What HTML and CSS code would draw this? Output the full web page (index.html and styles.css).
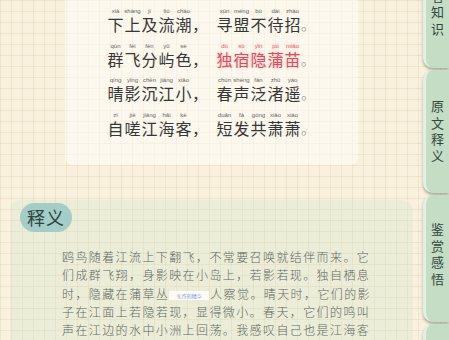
FILE: index.html
```html
<!DOCTYPE html>
<html lang="zh-CN">
  <head>
    <meta charset="UTF-8" />
    <meta name="viewport" content="width=device-width, initial-scale=1.0" />
    <title>江上</title>
    <link rel="stylesheet" href="styles.css">
  </head>
  <body>
    <div class="page">
      <main class="content">
        <!-- 原文 -->
        <section class="poem">
          <div class="line">
            <span class="c"><span class="py">xià</span>下</span>
            <span class="c"><span class="py">shàng</span>上</span>
            <span class="c"><span class="py">jí</span>及</span>
            <span class="c"><span class="py">liú</span>流</span>
            <span class="c"><span class="py">cháo</span>潮</span>
            <span class="c comma"><span class="py"></span>，</span>
            <span class="c"><span class="py">xún</span>寻</span>
            <span class="c"><span class="py">méng</span>盟</span>
            <span class="c"><span class="py">bù</span>不</span>
            <span class="c"><span class="py">dài</span>待</span>
            <span class="c"><span class="py">zhāo</span>招</span>
            <span class="c stop"><span class="py"></span>。</span>
          </div>
          <div class="line">
            <span class="c"><span class="py">qún</span>群</span>
            <span class="c"><span class="py">fēi</span>飞</span>
            <span class="c"><span class="py">fēn</span>分</span>
            <span class="c"><span class="py">yǔ</span>屿</span>
            <span class="c"><span class="py">sè</span>色</span>
            <span class="c comma"><span class="py"></span>，</span>
            <span class="c hl"><span class="py">dú</span>独</span>
            <span class="c hl"><span class="py">sù</span>宿</span>
            <span class="c hl"><span class="py">yǐn</span>隐</span>
            <span class="c hl"><span class="py">pú</span>蒲</span>
            <span class="c hl"><span class="py">miáo</span>苗</span>
            <span class="c stop"><span class="py"></span>。</span>
          </div>
          <div class="line">
            <span class="c"><span class="py">qíng</span>晴</span>
            <span class="c"><span class="py">yǐng</span>影</span>
            <span class="c"><span class="py">chén</span>沉</span>
            <span class="c"><span class="py">jiāng</span>江</span>
            <span class="c"><span class="py">xiǎo</span>小</span>
            <span class="c comma"><span class="py"></span>，</span>
            <span class="c"><span class="py">chūn</span>春</span>
            <span class="c"><span class="py">shēng</span>声</span>
            <span class="c"><span class="py">fàn</span>泛</span>
            <span class="c"><span class="py">zhǔ</span>渚</span>
            <span class="c"><span class="py">yáo</span>遥</span>
            <span class="c stop"><span class="py"></span>。</span>
          </div>
          <div class="line">
            <span class="c"><span class="py">zì</span>自</span>
            <span class="c"><span class="py">jiē</span>嗟</span>
            <span class="c"><span class="py">jiāng</span>江</span>
            <span class="c"><span class="py">hǎi</span>海</span>
            <span class="c"><span class="py">kè</span>客</span>
            <span class="c comma"><span class="py"></span>，</span>
            <span class="c"><span class="py">duǎn</span>短</span>
            <span class="c"><span class="py">fà</span>发</span>
            <span class="c"><span class="py">gòng</span>共</span>
            <span class="c"><span class="py">xiāo</span>萧</span>
            <span class="c"><span class="py">xiāo</span>萧</span>
            <span class="c stop"><span class="py"></span>。</span>
          </div>
        </section>

        <!-- 释义 -->
        <section class="explain">
          <div class="badge">释义</div>
          <p class="text">鸥鸟随着江流上下翻飞，不常要召唤就结伴而来。它们成群飞翔，身影映在小岛上，若影若现。独自栖息时，隐藏在蒲草丛<span class="tag">化作的精华</span>人察觉。晴天时，它们的影子在江面上若隐若现，显得微小。春天，它们的鸣叫声在江边的水中小洲上回荡。我感叹自己也是江海客</p>
        </section>
      </main>

      <nav class="tabs">
        <div class="tab first">作者知识</div>
        <div class="tab second">原文释义</div>
        <div class="tab third">鉴赏感悟</div>
        <div class="tab last"></div>
      </nav>
    </div>
  </body>
</html>
```

FILE: styles.css
```css
/* page + grid paper */
html,
body {
  margin: 0;
  height: 100%;
}

body {
  background-color: #f8f1de;
  background-image: linear-gradient(rgba(214, 190, 140, 0.25) 1px, transparent 1px),
    linear-gradient(90deg, rgba(214, 190, 140, 0.25) 1px, transparent 1px);
  background-size: 11px 11px;
  font-family: "Noto Sans CJK SC", "Noto Sans", sans-serif;
  overflow: hidden;
}

.page {
  display: flex;
  height: 340px;
  overflow: hidden;
}

.content {
  flex: 1;
}

/* poem block */
.poem {
  margin-left: 65px;
  width: 293px;
  height: 165px;
  box-sizing: border-box;
  padding: 8px 0 0 42px;
  background: rgba(255, 254, 250, 0.55);
  border-radius: 0 0 8px 8px;
}

.line {
  display: flex;
  height: 26px;
  margin-bottom: 8.7px;
}

.c {
  display: flex;
  flex-direction: column;
  align-items: center;
  width: 17px;
  font-size: 16px;
  line-height: 19px;
  color: #363636;
}

.py {
  display: block;
  height: 7px;
  font-family: "Liberation Sans", Arial, sans-serif;
  font-size: 6px;
  line-height: 7px;
  color: #666;
  white-space: nowrap;
}

.comma {
  width: 24px;
  align-items: flex-start;
}

.stop {
  align-items: flex-start;
  color: #a8a8a8;
  font-size: 14px;
}

.hl {
  color: #e44a5c;
  text-shadow: 0 0 3px rgba(240, 140, 150, 0.45);
}

.hl .py {
  color: #e8606e;
}

/* explanation block */
.explain {
  margin: 35px 0 0 10px;
  width: 403px;
  height: 200px;
  box-sizing: border-box;
  padding: 3px 0 0 10px;
  background: rgba(206, 228, 206, 0.28);
  border-radius: 10px 12px 0 0;
}

.badge {
  width: 52px;
  height: 29px;
  border-radius: 15px;
  background: #a5cdc8;
  color: #2c4541;
  font-size: 18px;
  line-height: 29px;
  text-align: center;
  letter-spacing: 1px;
}

.text {
  margin: 16px 0 0 42px;
  width: 310px;
  font-size: 12px;
  line-height: 18.3px;
  letter-spacing: 1.4px;
  color: #5d6863;
  font-weight: 300;
}

.tag {
  display: inline-block;
  width: 40px;
  height: 9px;
  margin-right: 1px;
  background: #fdfbf4;
  color: #3d6fd6;
  font-size: 5px;
  line-height: 9px;
  letter-spacing: 0;
  text-align: center;
  vertical-align: 1px;
}

/* side tabs */
.tabs {
  width: 26px;
  display: flex;
  flex-direction: column;
  gap: 2px;
}

.tab {
  flex: none;
  height: 123px;
  box-sizing: border-box;
  padding-top: 28px;
  background: #c5ddc5;
  border-left: 3px solid rgba(255, 255, 255, 0.55);
  border-radius: 10px 0 0 10px;
  box-shadow: 0 2px 3px rgba(70, 80, 70, 0.45);
  writing-mode: vertical-rl;
  font-size: 13px;
  letter-spacing: 3.5px;
  color: #2f4a3c;
  display: flex;
  align-items: center;
}

.first {
  margin-top: -55px;
}

.second {
  padding-top: 30px;
}

.third {
  height: 127px;
}
```
